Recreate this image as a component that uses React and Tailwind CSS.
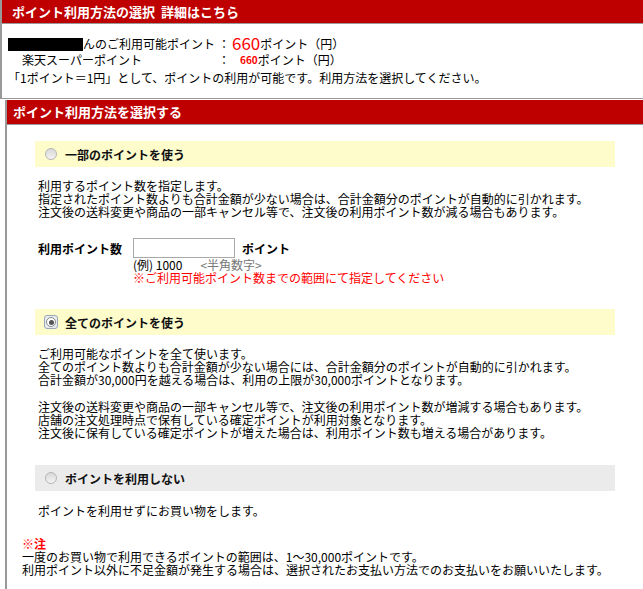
import React from 'react';

const font = { fontFamily: '"Noto Sans CJK JP", "Noto Sans", sans-serif' };

function Radio({ checked }) {
    if (checked) {
        return (
            <span className="w-[14px] h-[14px] rounded-[3px] border border-[#9aa8b8] bg-[#e8ecf0] flex items-center justify-center">
                <span className="w-[10px] h-[10px] rounded-full border border-[#888] bg-white flex items-center justify-center">
                    <span className="w-[5px] h-[5px] rounded-full bg-[#555]" />
                </span>
            </span>
        );
    }
    return (
        <span className="w-[12px] h-[12px] rounded-full border border-[#b5b5b5] bg-gradient-to-b from-[#d8d8d8] to-[#f4f4f4]" />
    );
}

function OptionBar({ label, checked, gray }) {
    return (
        <div
            className={`ml-[28px] w-[580px] h-[26px] flex items-center ${gray ? 'bg-[#ebebeb]' : 'bg-[#fffccc]'}`}
        >
            <div className="w-[30px] flex justify-center pl-[2px]">
                <Radio checked={checked} />
            </div>
            <span className="font-bold text-[12px] text-[#111]">{label}</span>
        </div>
    );
}

export default function App() {
    return (
        <div className="w-[643px] h-[589px] overflow-hidden bg-white text-[12px] text-black" style={font}>
            {/* Section 1 */}
            <div className="border-l-2 border-b border-[#999]">
                <div className="h-[24px] bg-[#bf0000] border-b border-[#999] flex items-center pl-[10px]">
                    <span className="text-white font-bold text-[13px]">ポイント利用方法の選択&nbsp;&nbsp;詳細はこちら</span>
                </div>
                <div className="h-[74px] pl-[6px] pt-[10px]">
                    <div className="grid grid-cols-[210px_14px_auto] items-end leading-[16px]">
                        <div className="flex items-end">
                            <span className="inline-block w-[75px] h-[13px] bg-black mb-[1px]" />
                            <span>んのご利用可能ポイント</span>
                        </div>
                        <div>：</div>
                        <div className="flex items-end">
                            <span className="text-[#ff0000] text-[17px] leading-[18px]">660</span>
                            <span>ポイント（円）</span>
                        </div>
                        <div className="pl-[14px]">楽天スーパーポイント</div>
                        <div>：</div>
                        <div className="flex items-end pl-[8px]">
                            <span className="text-[#ff0000] text-[10px] font-bold">660</span>
                            <span>ポイント（円）</span>
                        </div>
                    </div>
                    <div className="mt-[2px] leading-[16px]">
                        「1ポイント＝1円」として、ポイントの利用が可能です。利用方法を選択してください。
                    </div>
                </div>
            </div>

            {/* Section 2 */}
            <div className="ml-[5px] border-l-2 border-[#999] mt-[1px]">
                <div className="h-[25px] bg-[#bf0000] border-b border-[#999] flex items-center pl-[6px]">
                    <span className="text-white font-bold text-[13px]">ポイント利用方法を選択する</span>
                </div>

                <div className="pt-[16px] pb-[20px] leading-[13px]">
                    <OptionBar label="一部のポイントを使う" />
                    <div className="ml-[31px] mt-[12px]">
                        <p>利用するポイント数を指定します。</p>
                        <p>指定されたポイント数よりも合計金額が少ない場合は、合計金額分のポイントが自動的に引かれます。</p>
                        <p>注文後の送料変更や商品の一部キャンセル等で、注文後の利用ポイント数が減る場合もあります。</p>
                    </div>
                    <div className="ml-[31px] mt-[20px] flex items-center">
                        <span className="w-[95px] font-bold">利用ポイント数</span>
                        <input
                            type="text"
                            className="w-[102px] h-[20px] border border-[#aaa] bg-white outline-none px-1"
                        />
                        <span className="ml-[7px] font-bold">ポイント</span>
                    </div>
                    <div className="ml-[126px]">
                        <p>
                            (例) 1000<span className="ml-[18px] text-[#777]">&lt;半角数字&gt;</span>
                        </p>
                        <p className="text-[#ff0000]">※ご利用可能ポイント数までの範囲にて指定してください</p>
                    </div>

                    <div className="mt-[25px]">
                        <OptionBar label="全てのポイントを使う" checked />
                    </div>
                    <div className="ml-[31px] mt-[12px]">
                        <p>ご利用可能なポイントを全て使います。</p>
                        <p>全てのポイント数よりも合計金額が少ない場合には、合計金額分のポイントが自動的に引かれます。</p>
                        <p>合計金額が30,000円を越える場合は、利用の上限が30,000ポイントとなります。</p>
                        <p className="mt-[14px]">注文後の送料変更や商品の一部キャンセル等で、注文後の利用ポイント数が増減する場合もあります。</p>
                        <p>店舗の注文処理時点で保有している確定ポイントが利用対象となります。</p>
                        <p>注文後に保有している確定ポイントが増えた場合は、利用ポイント数も増える場合があります。</p>
                    </div>

                    <div className="mt-[26px]">
                        <OptionBar label="ポイントを利用しない" gray />
                    </div>
                    <div className="ml-[31px] mt-[13px]">
                        <p>ポイントを利用せずにお買い物をします。</p>
                    </div>

                    <div className="ml-[15px] mt-[20px]">
                        <p className="text-[#ff0000] font-bold">※注</p>
                        <p>一度のお買い物で利用できるポイントの範囲は、1〜30,000ポイントです。</p>
                        <p>利用ポイント以外に不足金額が発生する場合は、選択されたお支払い方法でのお支払いをお願いいたします。</p>
                    </div>
                </div>
            </div>
        </div>
    );
}
